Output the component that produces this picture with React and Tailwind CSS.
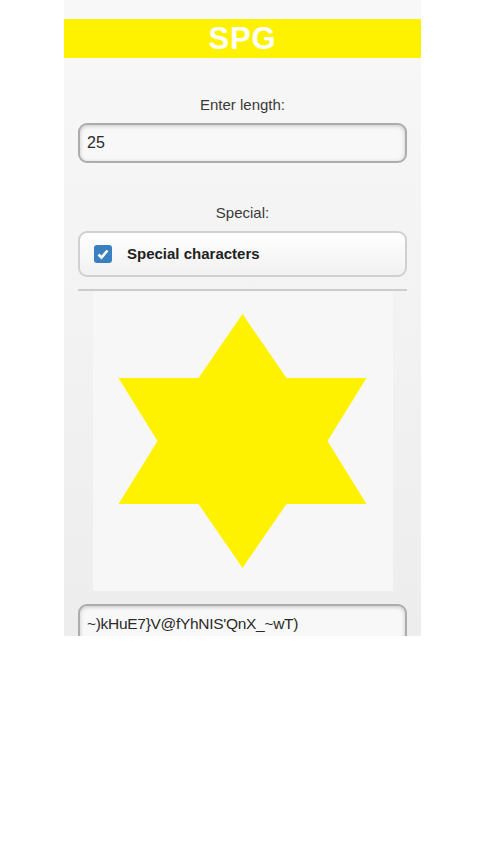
import React from 'react';

const font = { fontFamily: '"Liberation Sans", Arial, sans-serif' };

const Star = () => (
  <svg width="300" height="300" viewBox="0 0 300 300">
    <polygon
      fill="#fff200"
      points="149.5,23 193.5,87 273.5,87 234.5,150 273.5,213 193.5,213 149.5,277 105.5,213 25.5,213 64.5,150 25.5,87 105.5,87"
    />
  </svg>
);

const App = () => {
  return (
    <div className="h-[636px] overflow-hidden bg-white" style={font}>
      <div className="ml-[64px] w-[357px] h-full bg-gradient-to-b from-[#f8f8f8] to-[#ededed] pt-[19px]">
        <header className="h-[39px] bg-[#fff200] flex items-center justify-center">
          <h1 className="text-[31px] font-bold text-white leading-none tracking-wide">SPG</h1>
        </header>

        <div className="px-[14px]">
          <label className="block mt-[37px] mb-[8px] text-center text-[15px] leading-[20px] text-[#3a3a3a]">
            Enter length:
          </label>
          <div className="h-[40px] rounded-[9px] border-2 border-[#acacac] bg-[#f8f8f8] shadow-[inset_0_1px_4px_rgba(0,0,0,0.2)] flex items-center px-[7px] text-[16px] text-[#2a2a2a]">
            25
          </div>

          <label className="block mt-[40px] mb-[8px] text-center text-[15px] leading-[20px] text-[#3a3a3a]">
            Special:
          </label>
          <div className="h-[46px] rounded-[9px] border-2 border-[#d0d0d0] bg-gradient-to-b from-white to-[#f1f1f1] flex items-center pl-[14px] gap-[15px]">
            <span className="w-[18px] h-[18px] rounded-[3px] bg-[#3a7fbf] flex items-center justify-center">
              <svg width="12" height="12" viewBox="0 0 12 12">
                <path d="M1.5 6.5 L4.5 9.5 L10.5 2.5" stroke="white" strokeWidth="2.6" fill="none" />
              </svg>
            </span>
            <span className="text-[15px] font-bold text-[#222]">Special characters</span>
          </div>

          <div className="mt-[12px] h-[2px] bg-[#cccccc]" />

          <div className="w-[300px] h-[300px] mx-auto bg-[#f7f7f7]">
            <Star />
          </div>

          <div className="mt-[13px] h-[40px] rounded-[9px] border-2 border-[#acacac] bg-[#f8f8f8] shadow-[inset_0_1px_4px_rgba(0,0,0,0.2)] flex items-center px-[7px] text-[15.5px] text-[#2a2a2a] tracking-[-0.3px]">
            ~)kHuE7}V@fYhNIS'QnX_~wT)
          </div>
        </div>
      </div>
    </div>
  );
};

export default App;
